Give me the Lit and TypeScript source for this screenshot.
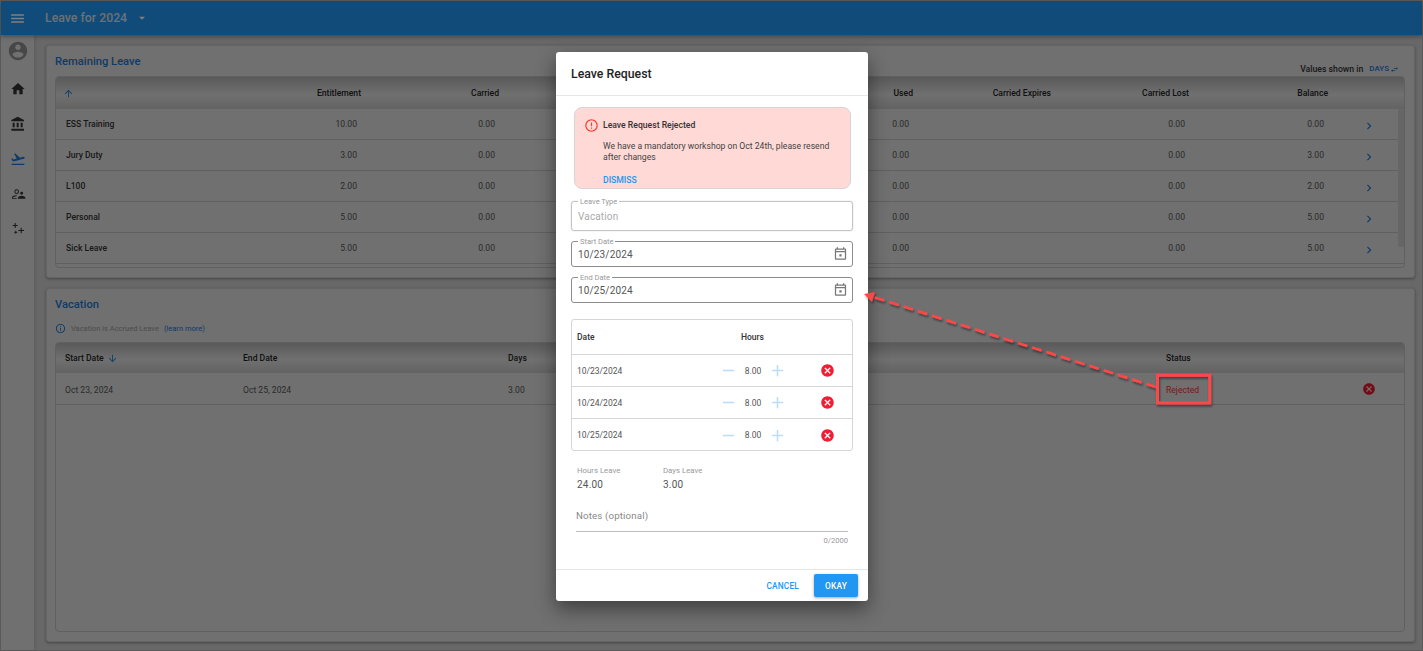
import { LitElement, html, css, svg } from "lit";
import { customElement } from "lit/decorators.js";

const P = {
  menu: "M3 18h18v-2H3v2zm0-5h18v-2H3v2zm0-7v2h18V6H3z",
  caret: "M7 10l5 5 5-5z",
  account: "M12 2C6.48 2 2 6.48 2 12s4.48 10 10 10 10-4.48 10-10S17.52 2 12 2zm0 3c1.66 0 3 1.34 3 3s-1.34 3-3 3-3-1.34-3-3 1.34-3 3-3zm0 14.2c-2.5 0-4.71-1.28-6-3.22.03-1.99 4-3.08 6-3.08 1.99 0 5.97 1.09 6 3.08-1.29 1.94-3.5 3.22-6 3.22z",
  home: "M10 20v-6h4v6h5v-8h3L12 3 2 12h3v8z",
  bank: "M4 10v7h3v-7H4zm6 0v7h3v-7h-3zM2 22h19v-3H2v3zm14-12v7h3v-7h-3zm-4.5-9L2 6v2h19V6l-9.5-5z",
  flight: "M2.5 19h19v2h-19zm19.57-9.36c-.21-.8-1.04-1.28-1.84-1.06L14.92 10l-6.9-6.43-1.93.51 4.14 7.17-4.97 1.33-1.97-1.54-1.45.39 1.82 3.16.77 1.33 1.6-.43 5.31-1.42 4.35-1.16L21 11.49c.81-.23 1.28-1.05 1.07-1.85z",
  people: "M10 12a3.5 3.5 0 1 0 0-7 3.5 3.5 0 0 0 0 7zm0-5.5a2 2 0 1 1 0 4 2 2 0 0 1 0-4zM3 19v-1.5c0-2.2 3.8-3.5 7-3.5v1.5c-3 0-5.5 1.2-5.5 2v.5H10V19H3zm14.5-6a2.2 2.2 0 1 0 0-4.4 2.2 2.2 0 0 0 0 4.4zM12 19v-1.6c0-1.8 3.6-2.9 5.5-2.9s5.5 1.1 5.5 2.9V19H12z",
  plusses: "M7 3h1.6v3H11.6v1.6H8.6v3H7v-3H4V6h3V3zM16 10h1.6v3.4H21V15h-3.4v3.4H16V15h-3.4v-1.6H16V10zM8 14.5h1.2v1.8H11v1.2H9.2v1.8H8v-1.8H6.2v-1.2H8v-1.8z",
  up: "M4 12l1.41 1.41L11 7.83V20h2V7.83l5.58 5.59L20 12l-8-8-8 8z",
  down: "M20 12l-1.41-1.41L13 16.17V4h-2v12.17l-5.58-5.59L4 12l8 8 8-8z",
  chevron: "M10 6L8.59 7.41 13.17 12l-4.58 4.59L10 18l6-6z",
  swap: "M6.99 11L3 15l3.99 4v-3H14v-2H6.99v-3zM21 9l-3.99-4v3H10v2h7.01v3L21 9z",
  info: "M11 7h2v2h-2zm0 4h2v6h-2zm1-9C6.48 2 2 6.48 2 12s4.48 10 10 10 10-4.48 10-10S17.52 2 12 2zm0 18c-4.41 0-8-3.59-8-8s3.59-8 8-8 8 3.59 8 8-3.59 8-8 8z",
  cancel: "M12 2C6.47 2 2 6.47 2 12s4.47 10 10 10 10-4.47 10-10S17.53 2 12 2zm5 13.59L15.59 17 12 13.41 8.41 17 7 15.59 10.59 12 7 8.41 8.41 7 12 10.59 15.59 7 17 8.41 13.41 12 17 15.59z",
  error: "M11 15h2v2h-2zm0-8h2v6h-2zm.99-5C6.47 2 2 6.48 2 12s4.47 10 9.99 10C17.52 22 22 17.52 22 12S17.52 2 11.99 2zM12 20c-4.42 0-8-3.58-8-8s3.58-8 8-8 8 3.58 8 8-3.58 8-8 8z",
  calendar: "M19 4h-1V2h-2v2H8V2H6v2H5c-1.11 0-1.99.9-1.99 2L3 20c0 1.1.89 2 2 2h14c1.1 0 2-.9 2-2V6c0-1.1-.9-2-2-2zm0 16H5V10h14v10zm0-12H5V6h14v2zM10.2 13.2h3.6v3.6h-3.6z",
  minus: "M3 10.7h18v2.6H3z",
  plus: "M10.7 3h2.6v7.7H21v2.6h-7.7V21h-2.6v-7.7H3v-2.6h7.7z",
};

const icon = (d: string, size: number, cls = "") => html`<svg class=${cls} width=${size} height=${size} viewBox="0 0 24 24" fill="currentColor">${svg`<path d=${d}></path>`}</svg>`;

const leave: [string, string, string][] = [
  ["ESS Training", "10.00", "0.00"],
  ["Jury Duty", "3.00", "3.00"],
  ["L100", "2.00", "2.00"],
  ["Personal", "5.00", "5.00"],
  ["Sick Leave", "5.00", "5.00"],
];

@customElement("app-root")
export class AppRoot extends LitElement {
  static styles = css`
    :host { display: block; position: relative; width: 100%; height: 651px; overflow: hidden; font-family: Roboto, "Noto Sans", sans-serif; color: #222; }
    * { box-sizing: border-box; }
    svg { display: block; flex: none; }
    .shell { height: 100%; display: flex; flex-direction: column; border: 1px solid #b6b6b6; background: #d0d0d0; }
    .top { height: 34px; flex: none; display: flex; align-items: center; background: #2196f3; color: #fff; padding-left: 8px; gap: 11px; box-shadow: 0 2px 4px rgba(0,0,0,.3); position: relative; }
    .top .ttl { font-size: 12.3px; font-weight: 500; margin-left: 8px; color: #d6e2ec; }
    .top .caret { margin-left: -3px; }
    .body { flex: 1; display: flex; min-height: 0; }
    .side { width: 33px; flex: none; background: #e0e0e0; display: flex; flex-direction: column; align-items: center; padding-top: 5px; color: #333; gap: 19px; box-shadow: 1px 0 3px rgba(0,0,0,.12); }
    .side .avatar { color: #8e8e8e; }
    .side .act { color: #1976d2; }
    .main { flex: 1; padding: 10px 7px 8px 12px; display: flex; flex-direction: column; gap: 10px; min-width: 0; }
    .panel { background: #e0e0e0; border: 1px solid #cacaca; border-radius: 3px; box-shadow: 0 1px 3px rgba(0,0,0,.35); padding: 0 9px 0 8px; }
    .p1 { height: 233px; }
    .p2 { height: 354px; display: flex; flex-direction: column; }
    .titlebar { height: 30px; display: flex; justify-content: space-between; }
    .title { font-size: 11.2px; font-weight: 500; color: #1976d2; margin-top: 9px; line-height: 14px; }
    .units { font-size: 8.7px; font-weight: 500; color: #333; display: flex; align-items: flex-end; gap: 6px; padding: 0 6px 2px 0; line-height: 10px; }
    .units b { font-weight: 500; color: #1976d2; display: flex; align-items: center; gap: 1px; font-size: 8px; }
    .tbl { border: 1px solid #c0c0c0; border-radius: 4px; overflow: hidden; position: relative; }
    .t1 { height: 192px; }
    .t2 { flex: 1; margin-bottom: 9px; }
    .thead { height: 32px; background: linear-gradient(#b4b4b4, #e0e0e0 55%, #c6c6c6); display: grid; align-items: center; font-size: 8.6px; font-weight: 500; color: #222; }
    .t2 .thead { height: 30px; }
    .row { height: 31px; display: grid; align-items: center; font-size: 8.6px; color: #555; border-bottom: 1px solid #c0c0c0; }
    .t2 .row { height: 32px; padding-top: 2px; }
    .g1 { grid-template-columns: 167px 138px 138px 414px 138px 138px 139px 1fr; }
    .g2 { grid-template-columns: 178px 265px 658px 1fr; padding-left: 9px; }
    .g1 > :first-child { padding-left: 10px; }
    .g1 > :first-child > svg { margin: 1px 0 0 -3px; }
    .num { text-align: right; padding-right: 4px; }
    .hnum { text-align: right; }
    .name { font-weight: 500; color: #333; }
    .blue { color: #1a84cf; }
    .chev { color: #1976d2; margin: 3px 0 0 34px; }
    .bar { position: absolute; right: 0; top: 32px; width: 6px; height: 138px; background: #cccccc; border-radius: 2px; }
    .sd { display: flex; align-items: center; gap: 3px; }
    .rej { color: #e53935; }
    .x { color: #e8182e; margin-left: 163px; margin-top: -2px; }
    .g2 > .sx { display: flex; align-items: center; }
    .note { height: 24px; margin: 4px 0 2px; display: flex; align-items: center; font-size: 7.5px; color: #999; }
    .note svg { color: #1976d2; margin-right: 5px; }
    .note a { color: #1976d2; margin-left: 5px; }
    .scrim { position: absolute; inset: 0; background: rgba(0,0,0,.5); }
    .modal { position: absolute; left: 556px; top: 52px; width: 312px; height: 549px; background: #fff; border-radius: 3px; box-shadow: 0 8px 20px rgba(0,0,0,.45); display: flex; flex-direction: column; }
    .mh { height: 44px; flex: none; display: flex; align-items: center; padding: 1px 15px 0; font-size: 12.3px; font-weight: 500; color: #222; border-bottom: 1px solid #e6e6e6; }
    .mb { flex: 1; padding: 11px 15px 0; display: flex; flex-direction: column; min-height: 0; }
    .alert { margin: 0 2px 0 3px; height: 82px; flex: none; background: #ffd9d6; border: 1px solid #d9d3da; border-radius: 8px; padding: 10px 10px 0 10px; display: grid; grid-template-columns: 18px 1fr; grid-auto-rows: min-content; font-size: 8.65px; color: #444; }
    .alert svg { color: #f44336; margin: 0 0 0 -1.5px; }
    .alert .h { font-weight: 500; color: #333; line-height: 14px; }
    .alert .t { grid-column: 2; margin-top: 8px; line-height: 10.5px; width: 240px; }
    .alert .d { grid-column: 2; margin-top: 13px; font-weight: 500; color: #2196f3; }
    .field { position: relative; border: 1px solid #8c8c8c; border-radius: 3px; height: 26px; display: flex; align-items: center; justify-content: space-between; padding: 1px 4px 0 6px; font-size: 10px; letter-spacing: .15px; color: #555; margin-top: 10px; flex: none; }
    .field.dis { height: 30px; margin-top: 12px; border-color: #c4c4c4; box-shadow: 0 0 1px #aaa; color: #aaa; padding-top: 0; }
    .field label { position: absolute; left: 6px; top: -5px; background: #fff; padding: 0 2px; font-size: 7.5px; line-height: 9px; letter-spacing: 0; color: #999; }
    .field svg { color: #777; margin-top: -2px; }
    .dt { margin-top: 16px; height: 132px; flex: none; border: 1px solid #d6d6d6; border-radius: 3px; font-size: 8.5px; color: #555; }
    .dr { display: grid; grid-template-columns: 144px 15px 34px 15px 1fr; align-items: center; padding-left: 5px; height: 32px; border-bottom: 1px solid #d6d6d6; }
    .dr:last-child { border-bottom: 0; }
    .dr.hd { height: 35px; grid-template-columns: 164px 1fr; font-weight: 500; color: #333; }
    .dr .v { text-align: center; }
    .dr .pm { color: #bbdefb; }
    .dr .c { color: #f01e33; margin-left: 35px; }
    .sum { display: flex; padding: 15px 0 0 6px; }
    .sum > div { width: 86px; }
    .sum small { display: block; font-size: 7.8px; color: #999; line-height: 10px; }
    .sum span { display: block; font-size: 10px; color: #555; margin-top: 3px; line-height: 12px; letter-spacing: .2px; }
    .notes { margin: 17px 5px 0; height: 24px; border-bottom: 1px solid #bdbdbd; font-size: 9.7px; color: #888; line-height: 13px; padding: 1px 0 0 0; letter-spacing: .15px; }
    .count { margin: 4px 5px 0; text-align: right; font-size: 7.6px; color: #999; line-height: 9px; }
    .mf { height: 32px; flex: none; border-top: 1px solid #e6e6e6; display: flex; align-items: center; justify-content: flex-end; padding: 0 10px 0 0; gap: 15px; font-size: 8.3px; font-weight: 500; letter-spacing: .2px; }
    .cancel { color: #2196f3; }
    .ok { width: 44px; height: 23px; background: #2196f3; color: #fff; border-radius: 2px; display: flex; align-items: center; justify-content: center; box-shadow: 0 1px 3px rgba(0,0,0,.35); }
    .anno { position: absolute; left: 0; top: 0; pointer-events: none; }
  `;

  render() {
    return html`
      <div class="shell">
        <div class="top">
          ${icon(P.menu, 17)}
          <span class="ttl">Leave for 2024</span>
          ${icon(P.caret, 14, "caret")}
        </div>
        <div class="body">
          <nav class="side">
            ${icon(P.account, 22, "avatar")}
            ${icon(P.home, 16)}
            ${icon(P.bank, 16)}
            ${icon(P.flight, 16, "act")}
            ${icon(P.people, 16)}
            ${icon(P.plusses, 16)}
          </nav>
          <main class="main">
            <section class="panel p1">
              <div class="titlebar">
                <div class="title">Remaining Leave</div>
                <div class="units">Values shown in <b>DAYS ${icon(P.swap, 9)}</b></div>
              </div>
              <div class="tbl t1">
                <div class="thead g1">
                  <div>${icon(P.up, 11, "blue")}</div>
                  <div class="hnum">Entitlement</div>
                  <div class="hnum">Carried</div>
                  <div class="hnum">Used</div>
                  <div class="hnum">Carried Expires</div>
                  <div class="hnum">Carried Lost</div>
                  <div class="hnum">Balance</div>
                  <div></div>
                </div>
                ${leave.map(([n, e, b]) => html`
                  <div class="row g1">
                    <div class="name">${n}</div>
                    <div class="num">${e}</div>
                    <div class="num">0.00</div>
                    <div class="num">0.00</div>
                    <div></div>
                    <div class="num">0.00</div>
                    <div class="num">${b}</div>
                    ${icon(P.chevron, 14, "chev")}
                  </div>`)}
                <div class="bar"></div>
              </div>
            </section>
            <section class="panel p2">
              <div class="title">Vacation</div>
              <div class="note">${icon(P.info, 11)}Vacation is Accrued Leave <a>(learn more)</a></div>
              <div class="tbl t2">
                <div class="thead g2">
                  <div class="sd">Start Date ${icon(P.down, 11, "blue")}</div>
                  <div>End Date</div>
                  <div>Days</div>
                  <div>Status</div>
                </div>
                <div class="row g2">
                  <div>Oct 23, 2024</div>
                  <div>Oct 25, 2024</div>
                  <div>3.00</div>
                  <div class="sx"><span class="rej">Rejected</span>${icon(P.cancel, 14, "x")}</div>
                </div>
              </div>
            </section>
          </main>
        </div>
      </div>
      <div class="scrim"></div>
      <div class="modal">
        <div class="mh">Leave Request</div>
        <div class="mb">
          <div class="alert">
            ${icon(P.error, 15)}
            <div class="h">Leave Request Rejected</div>
            <div class="t">We have a mandatory workshop on Oct 24th, please resend after changes</div>
            <div class="d">DISMISS</div>
          </div>
          <div class="field dis"><label>Leave Type</label>Vacation</div>
          <div class="field"><label>Start Date</label>10/23/2024 ${icon(P.calendar, 15)}</div>
          <div class="field"><label>End Date</label>10/25/2024 ${icon(P.calendar, 15)}</div>
          <div class="dt">
            <div class="dr hd"><div>Date</div><div>Hours</div></div>
            ${["10/23/2024", "10/24/2024", "10/25/2024"].map((d) => html`
              <div class="dr">
                <div>${d}</div>
                ${icon(P.minus, 15, "pm")}
                <div class="v">8.00</div>
                ${icon(P.plus, 15, "pm")}
                ${icon(P.cancel, 15, "c")}
              </div>`)}
          </div>
          <div class="sum">
            <div><small>Hours Leave</small><span>24.00</span></div>
            <div><small>Days Leave</small><span>3.00</span></div>
          </div>
          <div class="notes">Notes (optional)</div>
          <div class="count">0/2000</div>
        </div>
        <div class="mf"><span class="cancel">CANCEL</span><span class="ok">OKAY</span></div>
      </div>
      <svg class="anno" width="1423" height="651" viewBox="0 0 1423 651">
        <defs><filter id="s" x="-10%" y="-10%" width="120%" height="130%"><feDropShadow dx="1" dy="2" stdDeviation="1.2" flood-color="#000" flood-opacity=".45"></feDropShadow></filter></defs>
        <g filter="url(#s)" fill="none" stroke="#ff4747" stroke-width="2.7">
          <rect x="1157.5" y="375.3" width="52.2" height="27.7" stroke-width="3"></rect>
          <path d="M1156 387 L872 296.5" stroke-dasharray="10 5"></path>
          <path d="M864 294 L875 292 L872 302 Z" fill="#ff4747" stroke-width="0"></path>
        </g>
      </svg>
    `;
  }
}
